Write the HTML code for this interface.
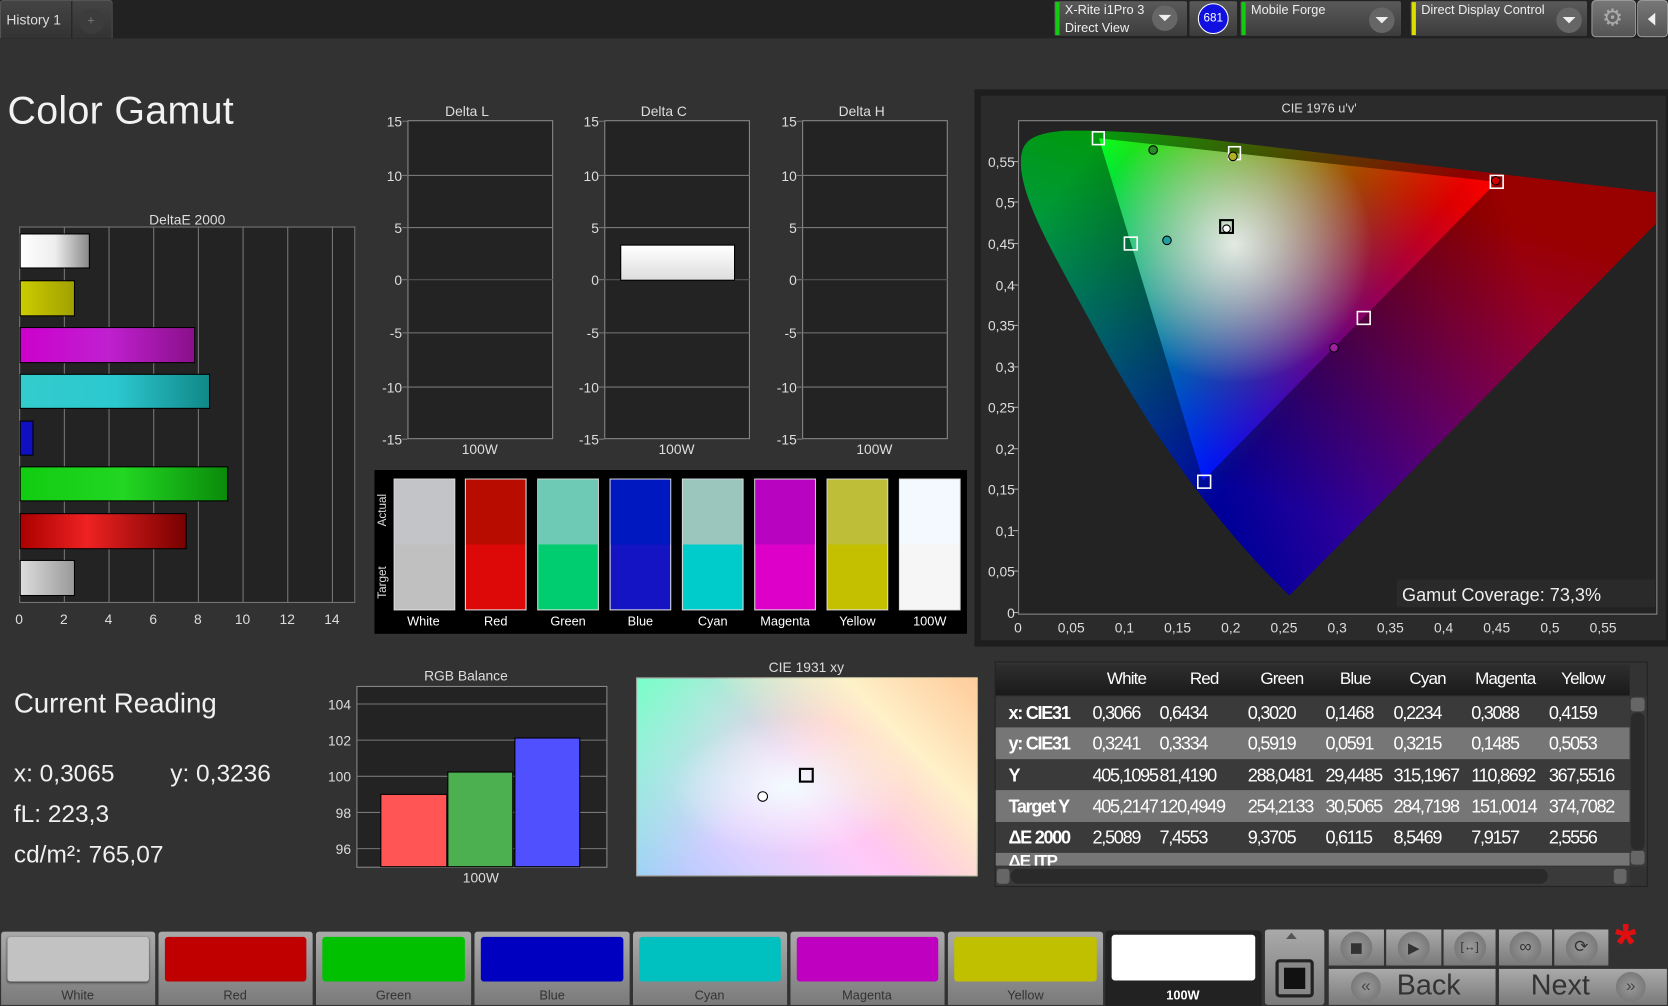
<!DOCTYPE html>
<html><head><meta charset="utf-8">
<style>
*{margin:0;padding:0;box-sizing:border-box}
html,body{width:1668px;height:1006px;overflow:hidden;background:#323232}
body{font-family:"Liberation Sans",sans-serif;color:#ddd}
#w{position:absolute;left:0;top:0;width:1568px;height:946px;transform:scale(1.06378,1.06343);transform-origin:0 0;background:#323232}
.a{position:absolute}
.t{position:absolute;white-space:nowrap;font-size:13px;color:#ddd}
.c{transform:translateX(-50%)}
.r{transform:translateX(-100%)}
.btn{position:absolute;background:linear-gradient(#5a5a5a,#3c3c3c);border:1px solid #222;border-radius:3px}
.gb{position:absolute;background:linear-gradient(#aaa,#7a7a7a);border:1px solid #333}
.circ{position:absolute;width:30px;height:30px;border-radius:50%;background:radial-gradient(#9a9a9a,#6c6c6c);left:50%;top:50%;transform:translate(-50%,-50%);color:#333;font-size:14px;text-align:center;line-height:30px}
</style></head><body><div id="w">

<!-- top bar -->
<div class="a" style="left:0;top:0;width:1568px;height:36px;background:#222"></div>
<div class="a" style="left:0;top:0;width:106px;height:36px;background:linear-gradient(#444,#333);border:1px solid #555;border-bottom:none;border-radius:3px 3px 0 0"></div>
<div class="a" style="left:67px;top:1px;width:1px;height:35px;background:#222"></div>
<div class="t" style="left:6px;top:11px;font-size:13px;color:#ddd">History 1</div>
<div class="a" style="left:74px;top:8px;width:24px;height:24px;border-radius:50%;background:#3c3c3c"></div>
<div class="t" style="left:82px;top:12px;color:#777;font-size:12px">+</div>

<div class="btn" style="left:990px;top:0;width:127px;height:35px"></div>
<div class="a" style="left:992px;top:2px;width:4px;height:31px;background:#1c1"></div>
<div class="t" style="left:1001px;top:2px;font-size:12px;color:#eee">X-Rite i1Pro 3</div>
<div class="t" style="left:1001px;top:19px;font-size:12px;color:#eee">Direct View</div>
<div class="a" style="left:1083px;top:5px;width:24px;height:24px;border-radius:50%;background:#666"></div>
<div class="a" style="left:1089px;top:14px;border-left:6px solid transparent;border-right:6px solid transparent;border-top:6px solid #eee"></div>
<div class="btn" style="left:1117px;top:0;width:47px;height:35px"></div>
<div class="a" style="left:1126px;top:3px;width:29px;height:29px;border-radius:50%;background:#1010e0;border:1.5px solid #fff;color:#fff;font-size:11px;text-align:center;line-height:26px">681</div>
<div class="btn" style="left:1165px;top:0;width:153px;height:35px"></div>
<div class="a" style="left:1167px;top:2px;width:4px;height:31px;background:#1c1"></div>
<div class="t" style="left:1176px;top:2px;font-size:12px;color:#eee">Mobile Forge</div>
<div class="a" style="left:1287px;top:7px;width:24px;height:24px;border-radius:50%;background:#666"></div>
<div class="a" style="left:1293px;top:16px;border-left:6px solid transparent;border-right:6px solid transparent;border-top:6px solid #eee"></div>
<div class="btn" style="left:1325px;top:0;width:168px;height:35px"></div>
<div class="a" style="left:1327px;top:2px;width:4px;height:31px;background:#dd0"></div>
<div class="t" style="left:1336px;top:2px;font-size:12px;color:#eee">Direct Display Control</div>
<div class="a" style="left:1463px;top:7px;width:24px;height:24px;border-radius:50%;background:#666"></div>
<div class="a" style="left:1469px;top:16px;border-left:6px solid transparent;border-right:6px solid transparent;border-top:6px solid #eee"></div>
<div class="a" style="left:1496px;top:0;width:42px;height:35px;background:linear-gradient(#777,#555);border:1px solid #999;border-radius:4px"></div>
<div class="t" style="left:1506px;top:4px;font-size:22px;color:#aaa">⚙</div>
<div class="a" style="left:1539px;top:0;width:29px;height:35px;background:linear-gradient(#777,#555);border:1px solid #999;border-radius:4px"></div>
<div class="a" style="left:1549px;top:12px;border-top:6px solid transparent;border-bottom:6px solid transparent;border-right:7px solid #eee"></div>

<!-- title -->
<div class="t" style="left:7px;top:83px;font-size:37px;color:#f2f2f2;letter-spacing:.3px">Color Gamut</div>

<!-- DeltaE 2000 -->
<div class="t c" style="left:176px;top:199px">DeltaE 2000</div>
<div class="a" style="left:18px;top:213px;width:316px;height:354px;background:#232323;border:1px solid #777"></div>
<svg class="a" style="left:0;top:0" width="340" height="600">
<g stroke="#777" stroke-width="1">
<line x1="60.5" y1="213" x2="60.5" y2="567"/><line x1="102.5" y1="213" x2="102.5" y2="567"/><line x1="144.5" y1="213" x2="144.5" y2="567"/><line x1="186.5" y1="213" x2="186.5" y2="567"/><line x1="228.5" y1="213" x2="228.5" y2="567"/><line x1="270.5" y1="213" x2="270.5" y2="567"/><line x1="312.5" y1="213" x2="312.5" y2="567"/>
</g>
<defs>
<linearGradient id="bw"><stop offset="0" stop-color="#fff"/><stop offset=".5" stop-color="#eee"/><stop offset="1" stop-color="#888"/></linearGradient>
<linearGradient id="by"><stop offset="0" stop-color="#cc0"/><stop offset="1" stop-color="#a0a000"/></linearGradient>
<linearGradient id="bm"><stop offset="0" stop-color="#c0c"/><stop offset=".5" stop-color="#c020d0"/><stop offset="1" stop-color="#8a108a"/></linearGradient>
<linearGradient id="bc"><stop offset="0" stop-color="#3cc"/><stop offset=".5" stop-color="#2cc8d0"/><stop offset="1" stop-color="#108888"/></linearGradient>
<linearGradient id="bg"><stop offset="0" stop-color="#1c1"/><stop offset=".5" stop-color="#22d622"/><stop offset="1" stop-color="#0a8a0a"/></linearGradient>
<linearGradient id="br"><stop offset="0" stop-color="#a00"/><stop offset=".4" stop-color="#e22"/><stop offset="1" stop-color="#700"/></linearGradient>
<linearGradient id="bgr"><stop offset="0" stop-color="#ddd"/><stop offset="1" stop-color="#999"/></linearGradient>
</defs>
<g stroke="#000" stroke-width="1">
<rect x="19" y="220" width="65" height="32" fill="url(#bw)"/>
<rect x="19" y="264" width="51" height="33" fill="url(#by)"/>
<rect x="19" y="308" width="164" height="33" fill="url(#bm)"/>
<rect x="19" y="352" width="178" height="32" fill="url(#bc)"/>
<rect x="19" y="396" width="12" height="32" fill="#1010c0"/>
<rect x="19" y="439" width="195" height="32" fill="url(#bg)"/>
<rect x="19" y="483" width="156" height="33" fill="url(#br)"/>
<rect x="19" y="527" width="51" height="33" fill="url(#bgr)"/>
</g>
<g fill="#ddd" font-size="13" font-family="Liberation Sans" text-anchor="middle">
<text x="18" y="587">0</text><text x="60" y="587">2</text><text x="102" y="587">4</text><text x="144" y="587">6</text><text x="186" y="587">8</text><text x="228" y="587">10</text><text x="270" y="587">12</text><text x="312" y="587">14</text>
</g>
</svg>

<!-- Delta charts -->
<svg class="a" style="left:340px;top:90px" width="570" height="345" font-family="Liberation Sans" font-size="13">
<g id="dl">
<rect x="43.5" y="23.5" width="136" height="299" fill="#232323" stroke="#888"/>
<g stroke="#777"><line x1="43" y1="75" x2="180" y2="75"/><line x1="43" y1="124" x2="180" y2="124"/><line x1="43" y1="223" x2="180" y2="223"/><line x1="43" y1="274" x2="180" y2="274"/>
<line x1="38" y1="24" x2="43" y2="24"/><line x1="38" y1="75" x2="43" y2="75"/><line x1="38" y1="124" x2="43" y2="124"/><line x1="38" y1="173" x2="43" y2="173"/><line x1="38" y1="223" x2="43" y2="223"/><line x1="38" y1="274" x2="43" y2="274"/><line x1="38" y1="323" x2="43" y2="323"/></g>
<line x1="43" y1="173" x2="180" y2="173" stroke="#555"/>
<g fill="#ddd" text-anchor="end"><text x="38" y="29">15</text><text x="38" y="80">10</text><text x="38" y="129">5</text><text x="38" y="178">0</text><text x="38" y="228">-5</text><text x="38" y="279">-10</text><text x="38" y="328">-15</text></g>
<text x="111" y="337" fill="#ddd" text-anchor="middle">100W</text>
</g>
<text x="99" y="19" fill="#ddd" text-anchor="middle">Delta L</text>
<use href="#dl" x="185"/>
<text x="284" y="19" fill="#ddd" text-anchor="middle">Delta C</text>
<use href="#dl" x="371"/>
<text x="470" y="19" fill="#ddd" text-anchor="middle">Delta H</text>
<defs><linearGradient id="wb" x1="0" y1="0" x2="0" y2="1"><stop offset="0" stop-color="#fff"/><stop offset="1" stop-color="#ddd"/></linearGradient></defs>
<rect x="243.5" y="140.5" width="107" height="33" fill="url(#wb)" stroke="#000"/>
</svg>

<!-- patches -->
<div class="a" style="left:352px;top:442px;width:557px;height:154px;background:#000"></div>
<div class="t" style="left:354px;top:495px;transform:rotate(-90deg);transform-origin:0 0;font-size:11px;color:#ddd">Actual</div>
<div class="t" style="left:354px;top:563px;transform:rotate(-90deg);transform-origin:0 0;font-size:11px;color:#ddd">Target</div>
<svg class="a" style="left:352px;top:442px" width="557" height="154" font-family="Liberation Sans" font-size="12">
<g stroke="#ddd" stroke-width="1">
<rect x="18.5" y="8.5" width="57" height="123" fill="#c0c0c0"/>
<rect x="85.5" y="8.5" width="57" height="123" fill="#dd0808"/>
<rect x="153.5" y="8.5" width="57" height="123" fill="#00cc70"/>
<rect x="221.5" y="8.5" width="57" height="123" fill="#1414c4"/>
<rect x="289.5" y="8.5" width="57" height="123" fill="#00cccc"/>
<rect x="357.5" y="8.5" width="57" height="123" fill="#dd00c8"/>
<rect x="425.5" y="8.5" width="57" height="123" fill="#c4c000"/>
<rect x="493.5" y="8.5" width="57" height="123" fill="#f6f6f6"/>
</g>
<rect x="19" y="9" width="56" height="61" fill="#c2c4c7"/>
<rect x="86" y="9" width="56" height="61" fill="#b80c00"/>
<rect x="154" y="9" width="56" height="61" fill="#6ecab4"/>
<rect x="222" y="9" width="56" height="61" fill="#0018c0"/>
<rect x="290" y="9" width="56" height="61" fill="#9ac6be"/>
<rect x="358" y="9" width="56" height="61" fill="#b804c0"/>
<rect x="426" y="9" width="56" height="61" fill="#bebe38"/>
<rect x="494" y="9" width="56" height="61" fill="#f4f8ff"/>
<g fill="#fff" text-anchor="middle"><text x="46" y="146">White</text><text x="114" y="146">Red</text><text x="182" y="146">Green</text><text x="250" y="146">Blue</text><text x="318" y="146">Cyan</text><text x="386" y="146">Magenta</text><text x="454" y="146">Yellow</text><text x="522" y="146">100W</text></g>
</svg>

<!-- CIE 1976 -->
<div class="a" style="left:916px;top:84px;width:652px;height:524px;background:#1e1e1e"></div>
<div class="a" style="left:922px;top:90px;width:644px;height:512px;background:#2b2b2b"></div>
<div class="t c" style="left:1240px;top:95px;font-size:12px">CIE 1976 u'v'</div>
<svg class="a" style="left:0;top:0" width="1568" height="610" font-family="Liberation Sans" font-size="13">
<defs>
<linearGradient id="gr" gradientUnits="userSpaceOnUse" x1="1407" y1="171" x2="1082" y2="291"><stop offset="0" stop-color="#ff0000"/><stop offset="1" stop-color="#000"/></linearGradient>
<linearGradient id="gg" gradientUnits="userSpaceOnUse" x1="1033" y1="130" x2="1269" y2="311"><stop offset="0" stop-color="#00ff00"/><stop offset="1" stop-color="#000"/></linearGradient>
<linearGradient id="gbl" gradientUnits="userSpaceOnUse" x1="1131" y1="452" x2="1220" y2="150"><stop offset="0" stop-color="#0000ff"/><stop offset="1" stop-color="#000"/></linearGradient>
<radialGradient id="gw" gradientUnits="userSpaceOnUse" cx="1160" cy="230" r="130"><stop offset="0" stop-color="#fff" stop-opacity=".85"/><stop offset="1" stop-color="#fff" stop-opacity="0"/></radialGradient>
<clipPath id="loc"><path d="M1212,560 C1150,500 1090,420 1040,330 C1000,255 965,200 960,160 C958,135 965,126 1000,123 C1040,122 1100,126 1160,134 L1557,181 L1557,210 Z"/></clipPath>
<clipPath id="tri"><path d="M1033,130 L1407,171 L1131,452 Z"/></clipPath>
</defs>
<rect x="957.5" y="113.5" width="600" height="464" fill="#232323" stroke="#888"/>
<g clip-path="url(#loc)">
<rect x="950" y="110" width="620" height="460" fill="#000"/>
<rect x="950" y="110" width="620" height="460" fill="url(#gr)" style="mix-blend-mode:screen"/>
<rect x="950" y="110" width="620" height="460" fill="url(#gg)" style="mix-blend-mode:screen"/>
<rect x="950" y="110" width="620" height="460" fill="url(#gbl)" style="mix-blend-mode:screen"/>
<rect x="950" y="110" width="620" height="460" fill="#000" opacity=".4"/>
</g>
<g clip-path="url(#tri)">
<rect x="1030" y="125" width="380" height="330" fill="#000"/>
<rect x="1030" y="125" width="380" height="330" fill="url(#gr)" style="mix-blend-mode:screen"/>
<rect x="1030" y="125" width="380" height="330" fill="url(#gg)" style="mix-blend-mode:screen"/>
<rect x="1030" y="125" width="380" height="330" fill="url(#gbl)" style="mix-blend-mode:screen"/>
<rect x="1030" y="125" width="380" height="330" fill="url(#gw)"/>
</g>
<g fill="none" stroke="#fff" stroke-width="1.5">
<rect x="1027" y="124" width="11" height="12"/><rect x="1155" y="138" width="11" height="12"/><rect x="1401" y="165" width="12" height="12"/><rect x="1057" y="223" width="12" height="12"/><rect x="1276" y="293" width="12" height="12"/><rect x="1126" y="447" width="12" height="12"/>
</g>
<rect x="1147" y="207" width="12" height="12" fill="none" stroke="#000" stroke-width="2"/>
<g stroke="#000" stroke-width="1">
<circle cx="1084" cy="141" r="4" fill="#2a8a2a"/><circle cx="1159" cy="147" r="4" fill="#b0b020"/><circle cx="1097" cy="226" r="4" fill="#20a0a0"/><circle cx="1153" cy="215" r="3.5" fill="#fff"/><circle cx="1254" cy="327" r="4" fill="#a020a0"/><circle cx="1406" cy="170" r="4" fill="#c00"/>
</g>
<rect x="1313" y="545" width="243" height="26" fill="#2a2a2a"/>
<text x="1318" y="565" fill="#eee" font-size="17">Gamut Coverage:  73,3%</text>
<g stroke="#aaa"><line x1="952" y1="152" x2="957" y2="152"/><line x1="952" y1="190" x2="957" y2="190"/><line x1="952" y1="229" x2="957" y2="229"/><line x1="952" y1="268" x2="957" y2="268"/><line x1="952" y1="306" x2="957" y2="306"/><line x1="952" y1="345" x2="957" y2="345"/><line x1="952" y1="383" x2="957" y2="383"/><line x1="952" y1="422" x2="957" y2="422"/><line x1="952" y1="460" x2="957" y2="460"/><line x1="952" y1="499" x2="957" y2="499"/><line x1="952" y1="537" x2="957" y2="537"/><line x1="952" y1="576" x2="957" y2="576"/></g>
<g fill="#ddd" text-anchor="end">
<text x="954" y="157">0,55</text><text x="954" y="195">0,5</text><text x="954" y="234">0,45</text><text x="954" y="273">0,4</text><text x="954" y="311">0,35</text><text x="954" y="350">0,3</text><text x="954" y="388">0,25</text><text x="954" y="427">0,2</text><text x="954" y="465">0,15</text><text x="954" y="504">0,1</text><text x="954" y="542">0,05</text><text x="954" y="581">0</text>
</g>
<g fill="#ddd" text-anchor="middle">
<text x="957" y="595">0</text><text x="1007" y="595">0,05</text><text x="1057" y="595">0,1</text><text x="1107" y="595">0,15</text><text x="1157" y="595">0,2</text><text x="1207" y="595">0,25</text><text x="1257" y="595">0,3</text><text x="1307" y="595">0,35</text><text x="1357" y="595">0,4</text><text x="1407" y="595">0,45</text><text x="1457" y="595">0,5</text><text x="1507" y="595">0,55</text>
</g>
</svg>

<!-- Current reading -->
<div class="t" style="left:13px;top:646px;font-size:26px;color:#f0f0f0">Current Reading</div>
<div class="t" style="left:13px;top:714px;font-size:23px;color:#f0f0f0">x: 0,3065</div>
<div class="t" style="left:160px;top:714px;font-size:23px;color:#f0f0f0">y: 0,3236</div>
<div class="t" style="left:13px;top:752px;font-size:23px;color:#f0f0f0">fL: 223,3</div>
<div class="t" style="left:13px;top:790px;font-size:23px;color:#f0f0f0">cd/m²: 765,07</div>

<!-- RGB Balance -->
<svg class="a" style="left:290px;top:620px" width="290" height="220" font-family="Liberation Sans" font-size="13">
<text x="148" y="20" fill="#ddd" text-anchor="middle">RGB Balance</text>
<rect x="45.5" y="25.5" width="235" height="170" fill="#232323" stroke="#888"/>
<g stroke="#777"><line x1="45" y1="42" x2="280" y2="42"/><line x1="45" y1="76" x2="280" y2="76"/><line x1="45" y1="110" x2="280" y2="110"/><line x1="45" y1="144" x2="280" y2="144"/><line x1="45" y1="178" x2="280" y2="178"/></g>
<g fill="#ddd" text-anchor="end"><text x="40" y="47">104</text><text x="40" y="81">102</text><text x="40" y="115">100</text><text x="40" y="149">98</text><text x="40" y="183">96</text></g>
<rect x="68" y="127" width="62" height="68" fill="#ff5555" stroke="#000"/>
<rect x="131" y="106" width="61" height="89" fill="#4caf50" stroke="#000"/>
<rect x="194" y="74" width="61" height="121" fill="#5050ff" stroke="#000"/>
<text x="162" y="210" fill="#ddd" text-anchor="middle">100W</text>
</svg>

<!-- CIE 1931 -->
<div class="t c" style="left:758px;top:620px;font-size:13px">CIE 1931 xy</div>
<div class="a" style="left:598px;top:637px;width:321px;height:187px;border:1px solid #999;background:
radial-gradient(ellipse at 45% 55%,rgba(240,255,255,.95),rgba(240,255,255,0) 45%),
linear-gradient(135deg,rgba(120,255,200,1) 0%,rgba(150,255,240,0) 45%),
linear-gradient(45deg,#a8c8ff 0%,#ddd0ff 25%,#ffcaf8 45%,#ffb8d0 75%,#ff90c0 100%),#fff"></div>
<div class="a" style="left:598px;top:637px;width:321px;height:187px;background:linear-gradient(225deg,rgba(255,210,150,.9) 0%,rgba(255,255,200,.8) 25%,rgba(255,255,220,0) 50%)"></div>
<div class="a" style="left:751px;top:722px;width:14px;height:14px;border:2px solid #000"></div>
<div class="a" style="left:712px;top:744px;width:10px;height:10px;border:1px solid #000;border-radius:50%;background:#fff"></div>

<!-- table -->
<div class="a" style="left:935px;top:622px;width:614px;height:212px;background:#333;border:1px solid #222"></div>
<div class="a" style="left:936px;top:625px;width:596px;height:29px;background:linear-gradient(#2e2e2e,#1a1a1a)"></div>
<div class="a" style="left:936px;top:655px;width:596px;height:29px;background:#3a3a3a"></div>
<div class="a" style="left:936px;top:684px;width:596px;height:30px;background:#767676"></div>
<div class="a" style="left:936px;top:714px;width:596px;height:29px;background:#3a3a3a"></div>
<div class="a" style="left:936px;top:743px;width:596px;height:30px;background:#767676"></div>
<div class="a" style="left:936px;top:773px;width:596px;height:29px;background:#3a3a3a"></div>
<div class="a" style="left:936px;top:802px;width:596px;height:12px;background:#767676;overflow:hidden">
<div class="t" style="left:12px;top:0;font-size:16px;font-weight:bold;color:#fff;letter-spacing:-1px">ΔE ITP</div></div>
<div>
<div class="t c" style="left:1059px;top:630px;font-size:16px;color:#fff;letter-spacing:-.8px">White</div>
<div class="t c" style="left:1132px;top:630px;font-size:16px;color:#fff;letter-spacing:-.8px">Red</div>
<div class="t c" style="left:1205px;top:630px;font-size:16px;color:#fff;letter-spacing:-.8px">Green</div>
<div class="t c" style="left:1274px;top:630px;font-size:16px;color:#fff;letter-spacing:-.8px">Blue</div>
<div class="t c" style="left:1342px;top:630px;font-size:16px;color:#fff;letter-spacing:-.8px">Cyan</div>
<div class="t c" style="left:1415px;top:630px;font-size:16px;color:#fff;letter-spacing:-.8px">Magenta</div>
<div class="t c" style="left:1488px;top:630px;font-size:16px;color:#fff;letter-spacing:-.8px">Yellow</div>
</div>
<svg class="a" style="left:0;top:0" width="1568" height="840" font-family="Liberation Sans" font-size="17" fill="#fff" letter-spacing="-1.2">
<g font-weight="bold"><text x="948" y="676">x: CIE31</text><text x="948" y="705">y: CIE31</text><text x="948" y="735">Y</text><text x="948" y="764">Target Y</text><text x="948" y="793">ΔE 2000</text></g>
<g>
<text x="1027" y="676">0,3066</text><text x="1090" y="676">0,6434</text><text x="1173" y="676">0,3020</text><text x="1246" y="676">0,1468</text><text x="1310" y="676">0,2234</text><text x="1383" y="676">0,3088</text><text x="1456" y="676">0,4159</text>
<text x="1027" y="705">0,3241</text><text x="1090" y="705">0,3334</text><text x="1173" y="705">0,5919</text><text x="1246" y="705">0,0591</text><text x="1310" y="705">0,3215</text><text x="1383" y="705">0,1485</text><text x="1456" y="705">0,5053</text>
<text x="1027" y="735">405,1095</text><text x="1090" y="735">81,4190</text><text x="1173" y="735">288,0481</text><text x="1246" y="735">29,4485</text><text x="1310" y="735">315,1967</text><text x="1383" y="735">110,8692</text><text x="1456" y="735">367,5516</text>
<text x="1027" y="764">405,2147</text><text x="1090" y="764">120,4949</text><text x="1173" y="764">254,2133</text><text x="1246" y="764">30,5065</text><text x="1310" y="764">284,7198</text><text x="1383" y="764">151,0014</text><text x="1456" y="764">374,7082</text>
<text x="1027" y="793">2,5089</text><text x="1090" y="793">7,4553</text><text x="1173" y="793">9,3705</text><text x="1246" y="793">0,6115</text><text x="1310" y="793">8,5469</text><text x="1383" y="793">7,9157</text><text x="1456" y="793">2,5556</text>
</g>
</svg>
<div class="a" style="left:1532px;top:655px;width:16px;height:160px;background:#3a3a3a"></div>
<div class="a" style="left:1533px;top:670px;width:13px;height:130px;background:#2a2a2a;border-radius:6px"></div>
<div class="a" style="left:1533px;top:656px;width:13px;height:13px;background:#666;border-radius:3px"></div>
<div class="a" style="left:1533px;top:800px;width:13px;height:13px;background:#666;border-radius:3px"></div>
<div class="a" style="left:936px;top:815px;width:596px;height:18px;background:#3a3a3a"></div>
<div class="a" style="left:950px;top:817px;width:505px;height:14px;background:#2a2a2a;border-radius:7px"></div>
<div class="a" style="left:937px;top:817px;width:12px;height:14px;background:#666;border-radius:3px"></div>
<div class="a" style="left:1517px;top:817px;width:12px;height:14px;background:#666;border-radius:3px"></div>

<!-- bottom swatches -->
<div class="gb" style="left:0;top:875px;width:147px;height:71px;border-radius:4px 4px 0 0"><div class="a" style="left:6px;top:5px;width:133px;height:42px;background:#c2c2c2;border-radius:3px;box-shadow:0 1px 2px #444"></div></div>
<div class="gb" style="left:148px;top:875px;width:147px;height:71px;border-radius:4px 4px 0 0"><div class="a" style="left:6px;top:5px;width:133px;height:42px;background:#c00000;border-radius:3px"></div></div>
<div class="gb" style="left:296px;top:875px;width:148px;height:71px;border-radius:4px 4px 0 0"><div class="a" style="left:6px;top:5px;width:134px;height:42px;background:#00c000;border-radius:3px"></div></div>
<div class="gb" style="left:445px;top:875px;width:148px;height:71px;border-radius:4px 4px 0 0"><div class="a" style="left:6px;top:5px;width:134px;height:42px;background:#0000c0;border-radius:3px"></div></div>
<div class="gb" style="left:594px;top:875px;width:147px;height:71px;border-radius:4px 4px 0 0"><div class="a" style="left:6px;top:5px;width:133px;height:42px;background:#00c0c0;border-radius:3px"></div></div>
<div class="gb" style="left:742px;top:875px;width:147px;height:71px;border-radius:4px 4px 0 0"><div class="a" style="left:6px;top:5px;width:133px;height:42px;background:#c000c0;border-radius:3px"></div></div>
<div class="gb" style="left:890px;top:875px;width:148px;height:71px;border-radius:4px 4px 0 0"><div class="a" style="left:6px;top:5px;width:134px;height:42px;background:#c0c000;border-radius:3px"></div></div>
<div class="a" style="left:1039px;top:875px;width:147px;height:71px;background:#222;border-radius:4px 4px 0 0"><div class="a" style="left:6px;top:4px;width:135px;height:43px;background:#fff;border-radius:3px"></div></div>
<div>
<div class="t c" style="left:73px;top:929px;color:#333;font-size:12px">White</div>
<div class="t c" style="left:221px;top:929px;color:#333;font-size:12px">Red</div>
<div class="t c" style="left:370px;top:929px;color:#333;font-size:12px">Green</div>
<div class="t c" style="left:519px;top:929px;color:#333;font-size:12px">Blue</div>
<div class="t c" style="left:667px;top:929px;color:#333;font-size:12px">Cyan</div>
<div class="t c" style="left:815px;top:929px;color:#333;font-size:12px">Magenta</div>
<div class="t c" style="left:964px;top:929px;color:#333;font-size:12px">Yellow</div>
<div class="t c" style="left:1112px;top:929px;color:#fff;font-size:12px;font-weight:bold">100W</div>
</div>

<!-- controls -->
<div class="gb" style="left:1188px;top:873px;width:58px;height:73px;border-radius:4px"></div>
<div class="a" style="left:1209px;top:877px;border-left:5px solid transparent;border-right:5px solid transparent;border-bottom:6px solid #555"></div>
<div class="a" style="left:1199px;top:902px;width:36px;height:36px;border:3px solid #222;border-radius:4px;background:#888"></div>
<div class="a" style="left:1207px;top:910px;width:20px;height:20px;background:#111"></div>
<div class="gb" style="left:1248px;top:873px;width:54px;height:36px"><div class="circ"><span style="display:inline-block;width:10px;height:10px;background:#333;vertical-align:middle"></span></div></div>
<div class="gb" style="left:1302px;top:873px;width:54px;height:36px"><div class="circ">▶</div></div>
<div class="gb" style="left:1356px;top:873px;width:51px;height:36px"><div class="circ" style="font-size:11px">[↔]</div></div>
<div class="gb" style="left:1408px;top:873px;width:52px;height:36px"><div class="circ" style="font-size:16px">∞</div></div>
<div class="gb" style="left:1460px;top:873px;width:53px;height:36px"><div class="circ" style="font-size:16px">⟳</div></div>
<div class="t" style="left:1518px;top:858px;font-size:52px;color:#e01010;font-weight:bold">*</div>
<div class="gb" style="left:1248px;top:910px;width:159px;height:36px"></div>
<div class="gb" style="left:1408px;top:910px;width:160px;height:36px"></div>
<div class="a" style="left:1270px;top:914px;width:28px;height:28px;border-radius:50%;background:radial-gradient(#9a9a9a,#6c6c6c);color:#444;text-align:center;line-height:28px;font-size:16px">«</div>
<div class="t" style="left:1313px;top:911px;font-size:27px;color:#333">Back</div>
<div class="t" style="left:1439px;top:911px;font-size:27px;color:#333">Next</div>
<div class="a" style="left:1519px;top:914px;width:28px;height:28px;border-radius:50%;background:radial-gradient(#9a9a9a,#6c6c6c);color:#444;text-align:center;line-height:28px;font-size:16px">»</div>

</div></body></html>
